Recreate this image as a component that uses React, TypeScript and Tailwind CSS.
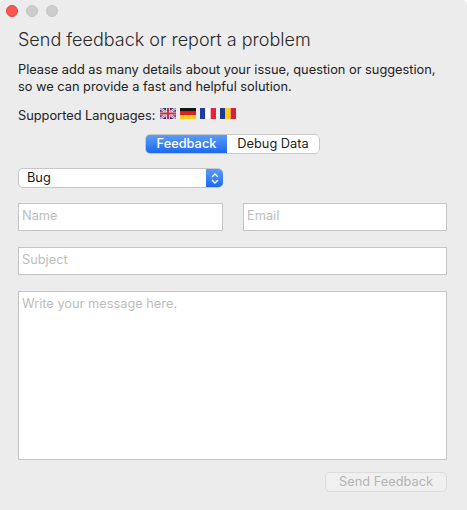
import React from 'react';

const Flags = () => (
    <div className="flex items-center gap-[4px] mt-[-5px]">
        <svg width="16" height="11" viewBox="0 0 16 11">
            <rect width="16" height="11" fill="#2b3a80" />
            <path d="M0 0L16 11M16 0L0 11" stroke="#e8e4ec" strokeWidth="2.4" />
            <path d="M0 0L16 11M16 0L0 11" stroke="#c8405a" strokeWidth="0.8" />
            <path d="M8 0V11M0 5.5H16" stroke="#e8e4ec" strokeWidth="3.6" />
            <path d="M8 0V11M0 5.5H16" stroke="#c8304a" strokeWidth="2" />
        </svg>
        <svg width="16" height="11" viewBox="0 0 16 11">
            <rect width="16" height="3.7" fill="#151515" />
            <rect y="3.7" width="16" height="3.6" fill="#dc1f1f" />
            <rect y="7.3" width="16" height="3.7" fill="#fbcb1c" />
        </svg>
        <svg width="16" height="11" viewBox="0 0 16 11">
            <rect width="5.3" height="11" fill="#1f3fa0" />
            <rect x="5.3" width="5.4" height="11" fill="#ffffff" />
            <rect x="10.7" width="5.3" height="11" fill="#e6233f" />
        </svg>
        <svg width="16" height="11" viewBox="0 0 16 11">
            <rect width="5.3" height="11" fill="#1f3a94" />
            <rect x="5.3" width="5.4" height="11" fill="#fbd01c" />
            <rect x="10.7" width="5.3" height="11" fill="#d8203a" />
        </svg>
    </div>
);

export default function App() {
    return (
        <div className="w-[467px] h-[510px] bg-[#ececec] rounded-t-[5px] overflow-hidden flex flex-col font-['Inter','Liberation_Sans',sans-serif] text-[#222222]">
            <div className="h-[22px] flex items-center gap-[8px] pl-[6px] shrink-0">
                <div className="w-[12px] h-[12px] rounded-full bg-[#fc5753] border border-[#e0443e]" />
                <div className="w-[12px] h-[12px] rounded-full bg-[#cdcdcd] border border-[#c4c4c4]" />
                <div className="w-[12px] h-[12px] rounded-full bg-[#cdcdcd] border border-[#c4c4c4]" />
            </div>
            <div className="flex flex-col px-[18px] flex-1">
                <h1 className="mt-[7px] h-[22px] text-[18px] leading-[22px] font-light text-[#2a2a2a] whitespace-nowrap">Send feedback or report a problem</h1>
                <p className="mt-[10px] text-[12.8px] leading-[17px] whitespace-nowrap">
                    Please add as many details about your issue, question or suggestion,<br />
                    so we can provide a fast and helpful solution.
                </p>
                <div className="mt-[12px] h-[17px] flex items-center gap-[5px] text-[12.8px] whitespace-nowrap">
                    <span>Supported Languages:</span>
                    <Flags />
                </div>
                <div className="mt-[10px] flex justify-center">
                    <div className="flex h-[20px] w-[175px] text-[12.8px] rounded-[5px] border border-[#c8c8c8] overflow-hidden ml-[-2px]">
                        <div className="w-[81px] flex items-center justify-center text-white font-medium bg-gradient-to-b from-[#5a9bf9] to-[#1c68f0]">Feedback</div>
                        <div className="flex-1 flex items-center justify-center bg-white">Debug Data</div>
                    </div>
                </div>
                <div className="mt-[14px] w-[205px] h-[20px] flex rounded-[5px] bg-white border border-[#c6c6c6] border-r-0 overflow-hidden text-[12.8px]">
                    <span className="flex-1 pl-[8px] flex items-center text-[#1a1a1a]">Bug</span>
                    <div className="w-[17px] flex items-center justify-center bg-gradient-to-b from-[#5a9bf9] to-[#1c68f0]">
                        <svg width="8" height="13" viewBox="0 0 8 13" fill="none" stroke="#ffffff" strokeWidth="1.4">
                            <path d="M1 5L4 2L7 5" />
                            <path d="M1 8L4 11L7 8" />
                        </svg>
                    </div>
                </div>
                <div className="mt-[15px] flex gap-[20px]">
                    <div className="w-[205px] h-[28px] bg-white border border-[#c4c4c4] pl-[3px] pb-[2px] flex items-center text-[12.8px] text-[#bdbdbd]">Name</div>
                    <div className="w-[204px] h-[28px] bg-white border border-[#c4c4c4] pl-[3px] pb-[2px] flex items-center text-[12.8px] text-[#bdbdbd]">Email</div>
                </div>
                <div className="mt-[16px] w-[429px] h-[28px] bg-white border border-[#c4c4c4] pl-[3px] pb-[2px] flex items-center text-[12.8px] text-[#bdbdbd]">Subject</div>
                <div className="mt-[16px] w-[429px] h-[169px] bg-white border border-[#c4c4c4] pl-[3px] pt-[3px] text-[12.8px] leading-[17px] text-[#bdbdbd]">Write your message here.</div>
                <div className="mt-[12px] flex justify-end w-[429px]">
                    <div className="w-[122px] h-[20px] rounded-[5px] bg-[#f0f0f0] border border-[#dcdcdc] flex items-center justify-center text-[12.8px] text-[#b4b4b4]">Send Feedback</div>
                </div>
            </div>
        </div>
    );
}
